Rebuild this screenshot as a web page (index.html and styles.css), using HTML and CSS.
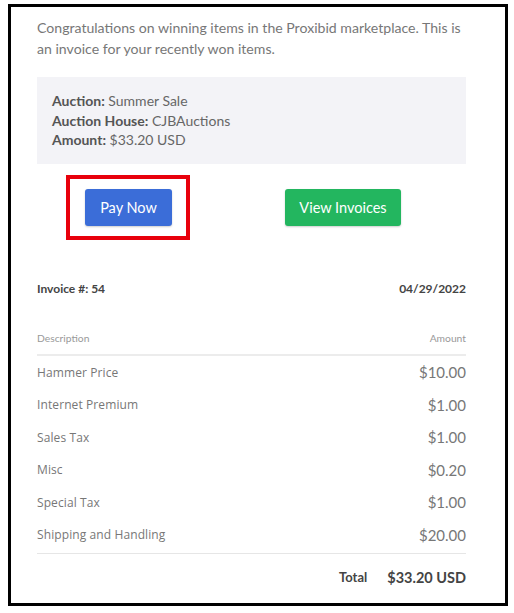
FILE: index.html
```html
<!DOCTYPE html>
<html>
<head>
<meta charset="utf-8">
<link rel="stylesheet" href="styles.css">
</head>
<body>
<div class="frame">
  <p class="intro">Congratulations on winning items in the Proxibid marketplace. This is an invoice for your recently won items.</p>
  <div class="summary">
    <div><b>Auction:</b> Summer Sale</div>
    <div><b>Auction House:</b> CJBAuctions</div>
    <div><b>Amount:</b> $33.20 USD</div>
  </div>
  <div class="actions">
    <div class="pay-wrap"><span class="btn btn-blue">Pay Now</span></div>
    <span class="btn btn-green">View Invoices</span>
  </div>
  <div class="inv-head">
    <span>Invoice #: 54</span>
    <span>04/29/2022</span>
  </div>
  <div class="table">
    <div class="th"><span>Description</span><span>Amount</span></div>
    <div class="tr"><span class="lbl">Hammer Price</span><span class="amt">$10.00</span></div>
    <div class="tr"><span class="lbl">Internet Premium</span><span class="amt">$1.00</span></div>
    <div class="tr"><span class="lbl">Sales Tax</span><span class="amt">$1.00</span></div>
    <div class="tr"><span class="lbl">Misc</span><span class="amt">$0.20</span></div>
    <div class="tr"><span class="lbl">Special Tax</span><span class="amt">$1.00</span></div>
    <div class="tr"><span class="lbl">Shipping and Handling</span><span class="amt">$20.00</span></div>
    <div class="total"><span class="t-lbl">Total</span><span class="t-amt">$33.20 USD</span></div>
  </div>
</div>
</body>
</html>
```
FILE: styles.css
```css
html, body {
  margin: 0;
  padding: 0;
  background: #fff;
}
body {
  font-family: Lato, "Open Sans", sans-serif;
}
.frame {
  box-sizing: border-box;
  margin: 4px 0 0 8px;
  width: 500px;
  height: 602px;
  border: 3px solid #000;
  padding: 10px 39px 0 26px;
}
.intro {
  margin: 0;
  font-size: 14.1px;
  line-height: 21px;
  color: #777;
}
.summary {
  margin-top: 18px;
  background: #f3f3f7;
  height: 87px;
  box-sizing: border-box;
  padding: 14px 15px 0;
  font-size: 14px;
  line-height: 19.5px;
  color: #666;
}
.summary b {
  color: #555;
  font-weight: 700;
}
.actions {
  display: flex;
  gap: 113px;
  padding-left: 48px;
  margin-top: 25px;
}
.pay-wrap {
  position: relative;
}
.pay-wrap::after {
  content: "";
  position: absolute;
  top: -14px;
  left: -19px;
  right: -18px;
  bottom: -14px;
  border: 4px solid #e8000c;
}
.btn {
  display: flex;
  align-items: center;
  justify-content: center;
  height: 37px;
  border-radius: 3px;
  color: #fff;
  font-size: 14.5px;
  box-shadow: 0 1px 2px rgba(0,0,0,0.2);
}
.btn-blue {
  width: 87px;
  background: #3b6dd8;
}
.btn-green {
  width: 116px;
  background: #23b65f;
}
.inv-head {
  display: flex;
  justify-content: space-between;
  margin-top: 55px;
  font-size: 12px;
  font-weight: 700;
  color: #444;
  line-height: 16px;
}
.table {
  margin-top: 33px;
}
.th {
  display: flex;
  justify-content: space-between;
  font-size: 10.3px;
  color: #999;
  line-height: 16px;
  padding-bottom: 8px;
  border-bottom: 2px solid #ececec;
}
.tr {
  display: flex;
  justify-content: space-between;
  align-items: center;
  height: 32.5px;
  color: #777;
}
.tr:first-of-type {
  margin-top: -2px;
}
.lbl {
  font-family: "Open Sans", Lato, sans-serif;
  font-size: 12px;
  letter-spacing: 0.1px;
}
.amt {
  font-size: 15px;
}
.total {
  display: flex;
  justify-content: flex-end;
  align-items: center;
  gap: 20px;
  border-top: 1px solid #e6e6e6;
  margin-top: 2px;
  height: 46px;
  color: #444;
  font-weight: 700;
}
.t-lbl {
  font-size: 13px;
}
.t-amt {
  font-size: 14.5px;
}
```
